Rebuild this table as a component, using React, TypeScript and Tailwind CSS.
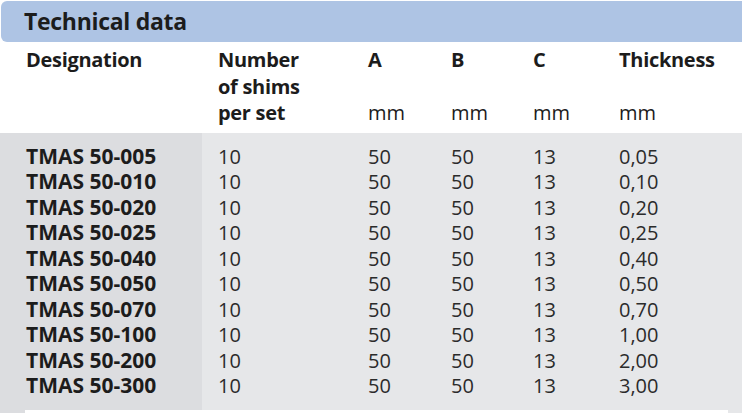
const rows = [
  ['TMAS 50-005', '10', '50', '50', '13', '0,05'],
  ['TMAS 50-010', '10', '50', '50', '13', '0,10'],
  ['TMAS 50-020', '10', '50', '50', '13', '0,20'],
  ['TMAS 50-025', '10', '50', '50', '13', '0,25'],
  ['TMAS 50-040', '10', '50', '50', '13', '0,40'],
  ['TMAS 50-050', '10', '50', '50', '13', '0,50'],
  ['TMAS 50-070', '10', '50', '50', '13', '0,70'],
  ['TMAS 50-100', '10', '50', '50', '13', '1,00'],
  ['TMAS 50-200', '10', '50', '50', '13', '2,00'],
  ['TMAS 50-300', '10', '50', '50', '13', '3,00'],
];

const cols = 'grid grid-cols-[202px_166px_83px_82px_86px_1fr]';

export default function App() {
  return (
    <div className="w-[742px] h-[413px] overflow-hidden bg-white text-[#1c1c1c] font-['Open_Sans',sans-serif]">
      <div className="ml-px mt-px h-[41px] rounded-l-md bg-[#aec4e4] pl-[23px] text-[23px] font-bold leading-[41px] tracking-[-0.3px]">
        Technical data
      </div>

      <div className={`${cols} pt-[5px] pb-[6px] text-[20px] leading-[26.5px]`}>
        <div className="pl-[26px] font-bold tracking-[-0.3px]">Designation</div>
        <div className="pl-[16px] font-bold tracking-[-0.3px]">
          Number
          <br />
          of shims
          <br />
          per set
        </div>
        {['A', 'B', 'C', 'Thickness'].map((h) => (
          <div key={h} className="flex flex-col">
            <span className="font-bold tracking-[-0.3px]">{h}</span>
            <span className="mt-auto">mm</span>
          </div>
        ))}
      </div>

      <div className="bg-[linear-gradient(to_right,#dcdde0_202px,#e6e7e9_202px)]">
        <div className={`${cols} pt-[11px] pb-[11px] text-[20px] leading-[25.5px]`}>
          {rows.map((r) => (
            <div key={r[0]} className="contents">
              <div className="pl-[26px] text-[21px] font-bold">{r[0]}</div>
              <div className="pl-[16px] text-[#2b2b2b]">{r[1]}</div>
              <div className="text-[#2b2b2b]">{r[2]}</div>
              <div className="text-[#2b2b2b]">{r[3]}</div>
              <div className="text-[#2b2b2b]">{r[4]}</div>
              <div className="text-[#2b2b2b]">{r[5]}</div>
            </div>
          ))}
        </div>
        <div className="ml-[25px] h-[6px] w-[703px] bg-white" />
      </div>
    </div>
  );
}
